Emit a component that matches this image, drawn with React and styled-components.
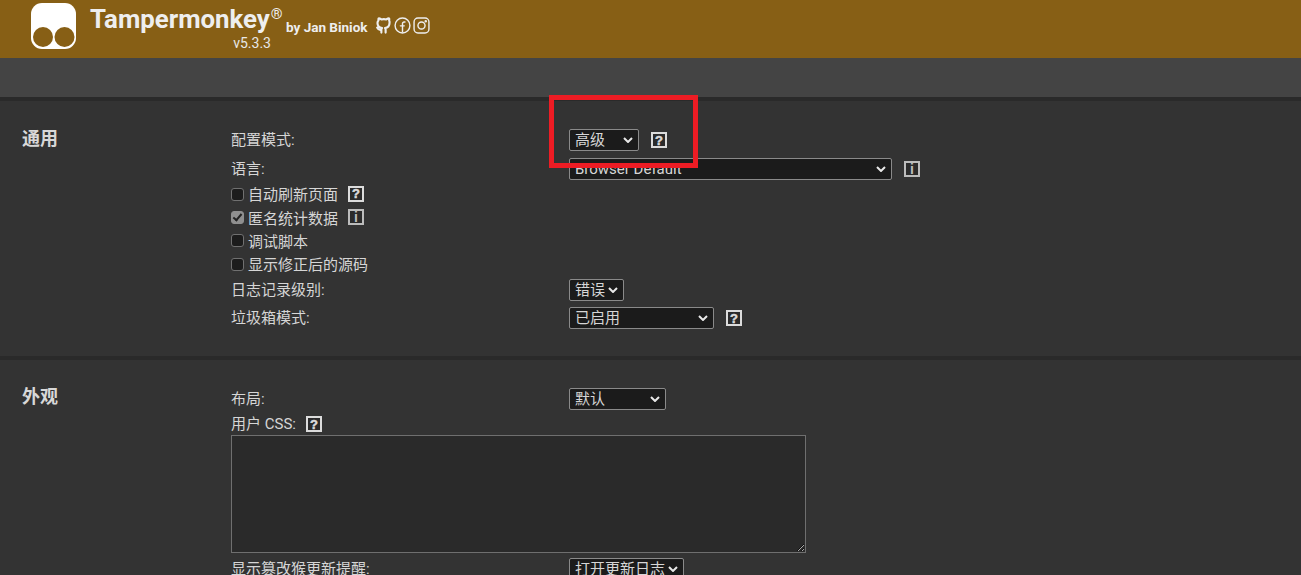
import React from 'react';
import styled, { createGlobalStyle } from 'styled-components';

const chevron = "url(\"data:image/svg+xml,%3Csvg xmlns='http://www.w3.org/2000/svg' width='10' height='6' viewBox='0 0 10 6'%3E%3Cpath d='M1 1l4 4 4-4' fill='none' stroke='%23e8e8e8' stroke-width='2'/%3E%3C/svg%3E\")";

const Global = createGlobalStyle`
  html, body { margin: 0; padding: 0; height: 100%; overflow: hidden; background: #333333; }
  body { font-family: Roboto, "Noto Sans CJK SC", sans-serif; font-size: 15px; color: #d6d6d6; color-scheme: dark; }
  #root { position: relative; height: 575px; overflow: hidden; }
`;

const Header = styled.header`
  height: 58px; background: #875f15; display: flex; align-items: flex-start;
  padding-left: 31px; box-sizing: border-box; color: #eeeeee;
`;
const LogoMark = styled.svg`
  width: 45px; height: 46px; margin-top: 3px; flex: none;
`;
const Brand = styled.div`
  margin-left: 14px; width: 181px; flex: none; display: flex; flex-direction: column;
`;
const Title = styled.div`
  font-size: 25.8px; font-weight: 700; line-height: 30px; margin-top: 4px; white-space: nowrap;
  sup { font-size: 15px; font-weight: 400; line-height: 0; vertical-align: 9px; margin-left: 1px; }
`;
const Version = styled.div`
  font-size: 14px; line-height: 16px; margin-top: 1px; align-self: flex-end; color: #e8e8e8;
`;
const Author = styled.div`
  margin-left: 15px; margin-top: 18px; font-size: 13.5px; font-weight: 700; line-height: 18px; white-space: nowrap;
`;
const Socials = styled.div`
  display: flex; align-items: center; gap: 2px; margin-left: 7px; margin-top: 17px;
`;
const Social = styled.svg`
  width: 17px; height: 17px; fill: none; stroke: #eeeeee; stroke-width: ${p => p.$w || 2};
  stroke-linecap: round; stroke-linejoin: round;
`;
const NavBand = styled.nav`
  height: 39px; background: #444444;
`;
const Section = styled.section`
  border-top: 4px solid #2a2a2a; display: flex; align-items: flex-start;
  padding: ${p => p.$top}px 0 ${p => p.$bottom}px 22px;
`;
const SectionTitle = styled.h2`
  width: 209px; flex: none; margin: 0; font-size: 18px; font-weight: 700; line-height: 25px; color: #d8d8d8;
`;
const Body = styled.div`
  display: flex; flex-direction: column; flex: 1;
`;
const SettingRow = styled.div`
  display: flex; align-items: center; height: 22px; margin: 3.5px 0 ${p => p.$after ?? 3.5}px;
`;
const Label = styled.span`
  width: 338px; flex: none; line-height: 20px; white-space: nowrap;
`;
const Select = styled.select`
  appearance: none;
  width: ${p => p.$w}px; height: 22px; box-sizing: border-box; flex: none; margin: 0;
  background: #1b1b1b ${chevron} no-repeat right 5px center;
  color: #d6d6d6; border: 1px solid #8a8a8a; border-radius: 2px;
  font: inherit; font-size: 15px; line-height: 20px; padding: 0 16px 0 5px; outline: none;
`;
const CheckList = styled.div`
  display: flex; flex-direction: column; margin: -1.5px 0 -0.4px;
`;
const CheckRow = styled.label`
  display: flex; align-items: center; height: 23.4px; white-space: nowrap;
`;
const Check = styled.input.attrs({ type: 'checkbox' })`
  appearance: none; position: relative; box-sizing: border-box;
  width: 13px; height: 13px; margin: 1px 4px 0 0; flex: none;
  background: #1c1c1c; border: 1.5px solid #707070; border-radius: 3px;
  &:checked { background: #8f8f8f; border-color: #8f8f8f; }
  &:checked::after {
    content: ""; position: absolute; left: 3px; top: 0; width: 3px; height: 7px;
    border: solid #222; border-width: 0 2px 2px 0; transform: rotate(40deg);
  }
`;
const Badge = styled.span`
  display: inline-flex; align-items: center; justify-content: center; flex: none;
  width: 16px; height: 16px; box-sizing: border-box; margin-left: ${p => p.$gap || 10}px;
  border: 2px solid ${p => p.$tone}; background: #2b2b2b; color: ${p => p.$tone};
  font-family: "Liberation Sans", sans-serif; font-size: ${p => p.$size}px; font-weight: 700; line-height: 1;
  -webkit-text-stroke: ${p => p.$stroke}px ${p => p.$tone};
`;
const InlineLabel = styled.span`
  line-height: 21px;
`;
const CssRow = styled.div`
  display: flex; align-items: center; height: 21px; margin-top: 0.5px;
`;
const CssArea = styled.textarea`
  display: block; width: 575px; height: 118px; box-sizing: border-box; margin: 0 0 1.5px;
  background: #2a2a2a; border: 1px solid #6f6f6f; color: #d6d6d6; outline: none; padding: 2px;
`;
const Callout = styled.div`
  position: absolute; left: 549px; top: 95px; width: 149px; height: 73px; box-sizing: border-box;
  border: 5px solid #ed1c24; pointer-events: none;
`;

const Help = ({ gap }) => <Badge $gap={gap} $tone="#dcdcdc" $size={13} $stroke={0.5}>?</Badge>;
const Info = ({ gap }) => <Badge $gap={gap} $tone="#bcbcbc" $size={14} $stroke={0}>i</Badge>;

const Drop = ({ w, value }) => (
  <Select $w={w} defaultValue={value}>
    <option>{value}</option>
  </Select>
);

export default function App() {
  return (
    <>
      <Global />
      <Header>
        <LogoMark viewBox="0 0 45 46">
          <path d="M11 0h23a11 11 0 0 1 11 11v24a11 11 0 0 1-11 11H11A11 11 0 0 1 0 35V11A11 11 0 0 1 11 0z" fill="#fff" />
          <circle cx="12" cy="34" r="10" fill="#875f15" />
          <circle cx="33.5" cy="34" r="10" fill="#875f15" />
        </LogoMark>
        <Brand>
          <Title>Tampermonkey<sup>®</sup></Title>
          <Version>v5.3.3</Version>
        </Brand>
        <Author>by Jan Biniok</Author>
        <Socials>
          <Social viewBox="0 0 24 24" $w={3}>
            <path d="M9 21v-3c-4 1-5-1-6-3M15 22v-3.87a3.37 3.37 0 0 0-.94-2.61c3.14-.35 6.44-1.54 6.44-7A5.44 5.44 0 0 0 20 4.77 5.07 5.07 0 0 0 19.91 2S18.73 1.65 16 3.48a13.38 13.38 0 0 0-7 0C6.27 1.65 5.09 2 5.09 2A5.07 5.07 0 0 0 5 4.77a5.44 5.44 0 0 0-1.5 3.78c0 5.42 3.3 6.61 6.44 7A3.37 3.37 0 0 0 9 18.13V22" />
          </Social>
          <Social viewBox="0 0 24 24">
            <circle cx="12" cy="12" r="10.5" />
            <path d="M15.5 7h-1.3A2.2 2.2 0 0 0 12 9.2V21M9 12.5h5.5" />
          </Social>
          <Social viewBox="0 0 24 24">
            <rect x="1.5" y="1.5" width="21" height="21" rx="5.5" />
            <circle cx="12" cy="12" r="5" />
            <circle cx="18" cy="6" r="0.8" fill="#eeeeee" />
          </Social>
        </Socials>
      </Header>
      <NavBand />
      <Section $top={24.5} $bottom={23}>
        <SectionTitle>通用</SectionTitle>
        <Body>
          <SettingRow><Label>配置模式:</Label><Drop w={70} value="高级" /><Help gap={12} /></SettingRow>
          <SettingRow><Label>语言:</Label><Drop w={323} value="Browser Default" /><Info gap={12} /></SettingRow>
          <CheckList>
            <CheckRow><Check /><span>自动刷新页面</span><Help /></CheckRow>
            <CheckRow><Check defaultChecked /><span>匿名统计数据</span><Info /></CheckRow>
            <CheckRow><Check /><span>调试脚本</span></CheckRow>
            <CheckRow><Check /><span>显示修正后的源码</span></CheckRow>
          </CheckList>
          <SettingRow $after={3}><Label>日志记录级别:</Label><Drop w={55} value="错误" /></SettingRow>
          <SettingRow><Label>垃圾箱模式:</Label><Drop w={145} value="已启用" /><Help gap={12} /></SettingRow>
        </Body>
      </Section>
      <Section $top={24.5} $bottom={0}>
        <SectionTitle>外观</SectionTitle>
        <Body>
          <SettingRow><Label>布局:</Label><Drop w={97} value="默认" /></SettingRow>
          <CssRow><InlineLabel>用户 CSS:</InlineLabel><Help gap={10} /></CssRow>
          <CssArea />
          <SettingRow><Label>显示篡改猴更新提醒:</Label><Drop w={115} value="打开更新日志" /></SettingRow>
        </Body>
      </Section>
      <Callout />
    </>
  );
}
